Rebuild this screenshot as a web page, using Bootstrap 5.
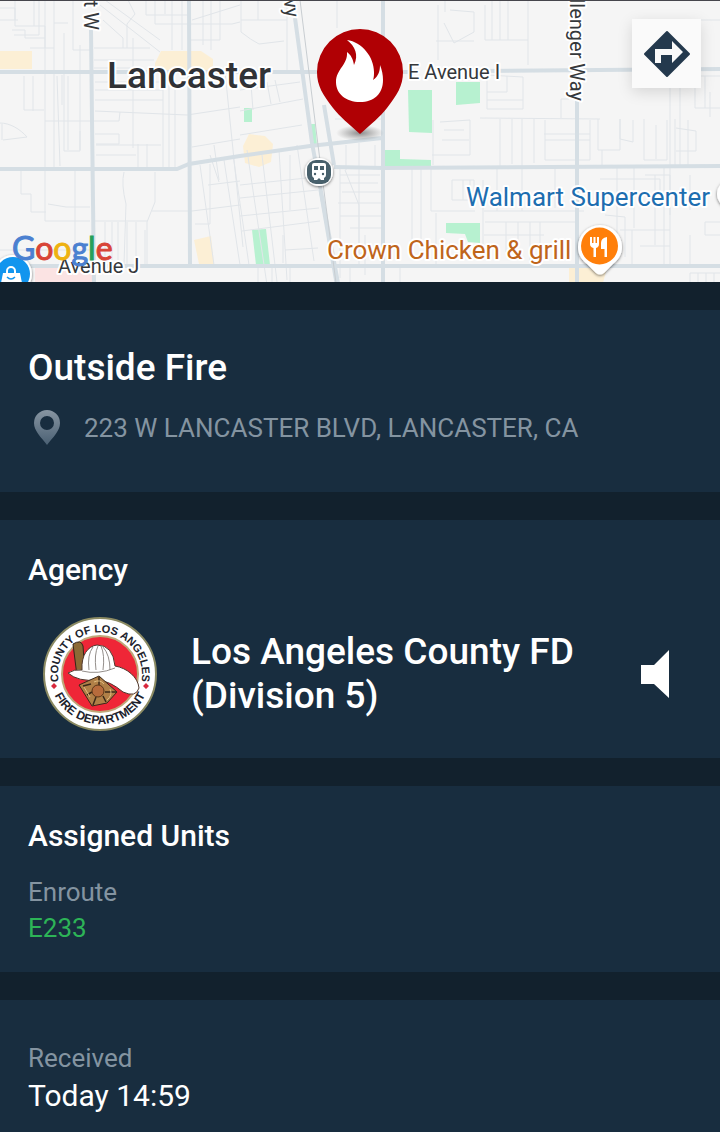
<!DOCTYPE html>
<html lang="en">
<head>
<meta charset="utf-8">
<meta name="viewport" content="width=device-width, initial-scale=1">
<title>Incident details</title>
<link href="https://cdn.jsdelivr.net/npm/bootstrap@5.3.0/dist/css/bootstrap.min.css" rel="stylesheet">
<style>
  body { background: #182d3f; color: #fff; font-family: Roboto, "Liberation Sans", sans-serif; }
  .map-view { height: 282px; background: #f5f5f5; border-top: 1px solid #46464c; }
  .map-view text { font-family: Roboto, "Liberation Sans", sans-serif; }
  .halo { paint-order: stroke; stroke: #fff; stroke-width: 4px; stroke-linejoin: round; }
  .directions { top: 18px; right: 19px; width: 69px; height: 69px; background: #fafafa; border: 0; box-shadow: 0 4px 14px rgba(0,0,0,.13); }
  .panel { border-top: 28px solid #12212d; padding: 32px 28px; }
  .panel-title { font-size: 30px; line-height: 36px; font-weight: 500; }
  .large-title { font-size: 37px; line-height: 44px; font-weight: 500; }
  .muted-text { color: #8494a1; font-size: 26px; line-height: 36px; }
  .unit { color: #2db457; font-size: 26px; line-height: 36px; }
  .received { font-size: 30px; line-height: 40px; }
  .panel-incident { padding-bottom: 46px; }
  .address-row { padding-top: 20px; gap: 22px; }
  .agency-row { padding: 28px 14px 0; gap: 33px; }
  .panel-agency, .panel-units { padding-bottom: 26px; }
</style>
</head>
<body>
<header class="map-view position-relative overflow-hidden">
  <svg width="100%" height="100%" viewBox="0 1 720 281" preserveAspectRatio="xMidYMid slice" role="img" aria-label="Map of Lancaster">
    <defs>
      <radialGradient id="pinShadow"><stop offset="0" stop-color="#444" stop-opacity=".6"/><stop offset="1" stop-color="#555" stop-opacity="0"/></radialGradient>
      <filter id="drop" x="-30%" y="-30%" width="160%" height="160%"><feDropShadow dx="0" dy="1" stdDeviation="1.5" flood-opacity=".55"/></filter>
    </defs>
    <rect width="720" height="283" fill="#f5f5f5"/>
    <!-- blocks -->
    <g fill="#fcefd5">
      <path d="M0 51h32v18H0zM155 63l6-12h40l12 8v13h-58zM194 240l17-4 3 28h-15zM243 146l6-12 16 2 8 8-2 18-12 5-14-4zM569 268h38l-4 15h-34z"/>
    </g>
    <path d="M35 268h60v15H35z" fill="#fbe3e3"/>
    <g fill="#b7f1d0">
      <path d="M244 108h8v14h-8zM408 90h24v43l-23-1zM456 82h24v21l-24 2zM385 150h15v9l31 1v6l-46 3zM310 124h5l2 21-5-1zM252 230l14-1 4 36h-14zM446 223h34v20l-12-1-3-8-19-1z"/>
    </g>
    <!-- local streets -->
    <g fill="none" stroke="#e1e5e9" stroke-width="1">
      <path d="M0 8h15v18h30v22M12 30h13v8h20M15 0v20M34 0v26M39 0v35h-25M45 0v168M54 0v168M54 23h14M57 76l3 90M64 33v118h16v-20M68 76v74M80 45v105M73 0v50h18M24 76v34h20M33 76v35M0 123c10 0 20 6 27 14l-24 3M2 124v16M45 121h74l1-9M21 168v26h10v18h15M45 168v53h45M75 168v75M48 204l18 3h24M0 250h90M0 20h18M62 75v30M30 48h24"/>
      <path d="M100 5l60 47M105 0l55 40M103 20l20 18v10M128 0l7 14-8 10v24M146 0v15h42M155 0v24h35M165 0v14M172 0v50M182 0v50M190 40h30V0M203 0v45M211 0v50M133 38v110M94 48h56M94 60h60M94 68h36M95 82h68M95 90h68M95 100h68M95 111l92 4 53-8M95 134h24v10H96M96 145h65M96 155h40M138 144v23M147 144v23M163 85v82M169 85v82M175 80v88M190 24h42l8-2M192 20l48-15"/>
      <path d="M124 172q-3 12 2 32l-2 60M155 172v30l-8 20v45M95 221h52M152 211h40M105 222v44M112 222v44M118 222v44M127 222v44M136 222v44M145 230v38M192 211l48-6M200 165l14 100M210 155l9 27M225 72l18 175M214 145l5 35M192 147l48-8M208 185l32-4M195 224h15v-60M224 160l16 105M233 155l16 110"/>
      <path d="M241 0v32q10 8 18 12l25-3M241 20h46M258 0v20M287 0v70M337 0v28M250 72l3 38M267 82l4 22M275 80l5 22M240 90l60-8M240 111l63-12M240 135l62-10M247 150l20 135M262 155l15 127M279 150l8 130M290 155v55M240 185l76-8M240 198l78-8M240 216l79-8M242 231l78-10M285 250l33-2M283 235v28M297 145l17 116M340 175h40M340 183h38M342 192h40M338 203h46M340 216h44M350 228h34M340 168v110M359 143v110l22 1M346 145v25M375 145v23M345 170l14 35v60M365 235v40M335 119h48M258 265v18M272 265v18M290 265v18M350 265v18M400 265v18"/>
      <path d="M412 166v90M421 166v80M431 166v45h44M433 120v45M440 122l30-2v35h-38M442 140h27M444 130h20M445 0v12M438 5v55M450 10l24 2v20l-20 11-10-20M436 41h38M436 213v52M452 180h22v20h-22zM463 180v20M470 180v20M485 5v35h43M492 0v40M500 0v40M508 0v40M528 0v65M487 75l36 2v32h-36zM487 100h36M487 92h20V76M480 118l120 1M500 119v47M512 119v45M522 119v92M534 119v44M544 134h46M545 120v40h45v-40M545 140h45M561 118v-19h8"/>
      <path d="M598 119v31h22v-31M620 119v20l13 3v-22M602 150v17M644 119v41h23v-40M656 125v34M675 119v48M688 120v46M676 128l20 3v20h-20M695 76v32h25M705 76v32M670 88v79M680 88v79M690 76h30M710 92v25M700 20h20M600 179h60v20M617 167v70M634 168v60M645 175h25v40M655 175v70M664 168v96M670 168v96M690 175v35M605 215l20 2v40M620 230h50M632 230v35M705 222h15M705 222v13h15M690 235v30M640 246h30M690 273h30M690 273v9M698 273v9M706 273v9M714 273v9M483 180v70M497 168v43M506 222v30M518 222v30M530 222v40M540 222v42M484 211h100M485 222h90M484 235h60M555 168v40"/>
    </g>
    <!-- arterial roads -->
    <g fill="none" stroke="#d5dee4" stroke-width="4">
      <path d="M0 72h320M320 72h90M480 71l240-2M91 30l1 90 2 163M189 0l1 265"/>
      <path d="M0 169h177l12-5 51-8 70-10 72-8M334 167l50 1 336-2M0 266h720M383 0v283"/>
      <path d="M295 18l17 125 26 140M324 105l10 60M577 95v188"/>
      <path d="M320 190l16 93" stroke-width="3"/>
    </g>
    <path d="M300 0l18 145 18 138" fill="none" stroke="#c8cdd1" stroke-width="1"/>
    <!-- place labels -->
    <g fill="#35383b" font-size="20">
      <text class="halo" transform="translate(84 30) rotate(90)" text-anchor="end">t W</text>
      <text class="halo" transform="translate(286 18) rotate(83)" text-anchor="end">wy</text>
      <text class="halo" transform="translate(570 101) rotate(90)" text-anchor="end">llenger Way</text>
      <text class="halo" x="408" y="79">E Avenue I</text>
      <text class="halo" x="58" y="273">Avenue J</text>
    </g>
    <text class="halo" x="107" y="88" font-size="37" font-weight="500" fill="#303236">Lancaster</text>
    <text class="halo" x="466" y="206" font-size="26" fill="#1d6eb0">Walmart Supercenter</text>
    <text class="halo" x="327" y="259" font-size="26" fill="#bf651b">Crown Chicken &amp; grill</text>
    <circle cx="731" cy="194" r="14" fill="#fff" filter="url(#drop)"/>
    <!-- transit stop -->
    <g>
      <circle cx="319" cy="172" r="14" fill="#fff" filter="url(#drop)"/>
      <rect x="307" y="160" width="24" height="24" rx="9" fill="#48606b"/>
      <path d="M314 163h10q2 0 2 2v10q0 2-2 3v2h-3l-2-2-2 2h-3v-2q-2-1-2-3v-10q0-2 2-2z" fill="#fff"/>
      <path d="M314 166h4v4h-4zM320 166h4v4h-4z" fill="#48606b"/><circle cx="315" cy="174" r="1.200" fill="#48606b"/><circle cx="323" cy="174" r="1.200" fill="#48606b"/>
    </g>
    <!-- restaurant -->
    <path d="M600 225a22 22 0 0 1 22 22c0 8-4 13-9 17l-9 9q-4 3-8 0l-9-9c-5-4-9-9-9-17a22 22 0 0 1 22-22z" fill="#fff" filter="url(#drop)"/>
    <circle cx="599.500" cy="246" r="18.500" fill="#ff7f0a"/>
    <path d="M590 237h2v6h1.500v-6h2v6H597v-6h2v7q0 3-3 4v9h-2.500v-9q-3.500-1-3.500-4zM607 237v20h-2.500v-8H601v-6q0-5 6-6z" fill="#fff"/>
    <!-- shopping -->
    <circle cx="13" cy="274" r="19" fill="#fff" filter="url(#drop)"/>
    <circle cx="13" cy="274" r="17" fill="#1295ee"/>
    <path d="M3 273h17l2 10H1z" fill="#fff"/><path d="M7 275v-4a4 4 0 0 1 8 0v4" fill="none" stroke="#fff" stroke-width="2"/><path d="M7 277q4 4 8 0" fill="none" stroke="#1295ee" stroke-width="1.500"/>
    <!-- map provider wordmark -->
    <text x="12" y="260" font-size="32" style="font-family:Lato,Roboto,sans-serif" stroke-width="1"><tspan fill="#4b80d0" stroke="#4b80d0">G</tspan><tspan fill="#d84437" stroke="#d84437">o</tspan><tspan fill="#eeb211" stroke="#eeb211">o</tspan><tspan fill="#4b80d0" stroke="#4b80d0">g</tspan><tspan fill="#27a058" stroke="#27a058">l</tspan><tspan fill="#d84437" stroke="#d84437">e</tspan></text>
    <!-- incident pin -->
    <ellipse cx="360" cy="133" rx="24" ry="8" fill="url(#pinShadow)"/>
    <path d="M360 134C349 124 340 117 333 108C323 95 317 86 317 72A43 43 0 0 1 403 72C403 86 397 95 387 108C380 117 371 124 360 134z" fill="#b00004"/>
    <path d="M347 40C362 42 374 57 374 72C374 75 374 77 373 80C379 76 380 70 380 65C382 70 383 75 383 80C383 94 374 102 360 102C346 102 336 94 336 82C336 69 348 65 347 52C351 55 353 59 354 65C359 55 355 46 347 40z" fill="#fff"/>
  </svg>
  <button type="button" class="directions position-absolute p-0 d-flex align-items-center justify-content-center" aria-label="Directions">
    <svg width="48" height="48" viewBox="0 0 48 48"><path d="M24 2l22 22-22 22L2 24z" fill="#24394d" stroke="#24394d" stroke-width="2" stroke-linejoin="round"/><path d="M12 33V19h17v-8l11 11-11 11v-8H18v8z" fill="#fafafa"/></svg>
  </button>
</header>

<main>
  <section class="panel panel-incident">
    <h1 class="large-title mb-0 pt-1">Outside Fire</h1>
    <div class="address-row d-flex align-items-center ps-1">
      <svg width="30" height="36" viewBox="0 0 30 36" aria-hidden="true" class="flex-shrink-0">
        <defs><linearGradient id="pinFade" x2="0" y2="1"><stop stop-color="#8795a2"/><stop offset="1" stop-color="#4a6073"/></linearGradient></defs>
        <path fill="url(#pinFade)" fill-rule="evenodd" d="M15 0a13 13 0 0 1 13 13c0 8-7 14-13 22C9 27 2 21 2 13A13 13 0 0 1 15 0zm0 6a7 7 0 1 0 0 14 7 7 0 0 0 0-14z"/>
      </svg>
      <span class="muted-text">223 W LANCASTER BLVD, LANCASTER, CA</span>
    </div>
  </section>

  <section class="panel panel-agency">
    <h2 class="panel-title mb-0">Agency</h2>
    <div class="agency-row d-flex align-items-center">
      <svg width="116" height="116" viewBox="-58 -58 116 116" class="flex-shrink-0" role="img" aria-label="County of Los Angeles Fire Department">
        <defs>
          <path id="arcTop" d="M-36 22A42 42 0 1 1 36 22"/>
          <path id="arcBottom" d="M-50 0A50 50 0 0 0 50 0"/>
        </defs>
        <circle r="56" fill="#fff" stroke="#8b8a62" stroke-width="2"/>
        <circle r="38" fill="#ef2637" stroke="#bfa779" stroke-width="2"/>
        <g fill="#20222c" font-weight="700" text-anchor="middle" style="font-family:'Liberation Sans',sans-serif">
          <text font-size="11"><textPath href="#arcTop" startOffset="50%">COUNTY OF LOS ANGELES</textPath></text>
          <text font-size="12"><textPath href="#arcBottom" startOffset="50%">FIRE DEPARTMENT</textPath></text>
        </g>
        <path d="M-46 9l3 3-3 3-3-3zM46 9l3 3-3 3-3-3z" fill="#d8283c"/>
        <path d="M-27-30q8-5 10 2l2 28-8 2z" fill="#8c6a35" stroke="#33251a"/>
        <path d="M-32-1Q-26-5-18-4C-19-19-12-28-3-29Q13-29 15-8C27-6 38 3 39 14Q36 24 23 18Q10 7-2 6Q-22 8-32-1z" fill="#fff" stroke="#51382d"/>
        <path d="M-11-4q-2-15 4-23M-4-4q-2-16 2-24M3-4q2-15-2-24M10-4q0-15-7-23M-18-3q16 4 33-3" fill="none" stroke="#77716c" stroke-width=".8"/>
        <path d="M-21 11L-1 2L17 18L7 29L-8 32z" fill="#b08047" stroke="#3b2919"/>
        <path d="M-17 12L-9 10M-1 3v8M16 18l-11 0M-7 31l3-8M-13 21l5-3M6 28l-3-6" stroke="#3b2919" stroke-width="1.500"/>
        <path d="M-16 13l6 10M-6 8q6-3 10 2M10 15q3 6-3 11" fill="none" stroke="#e0bd80"/>
        <circle cx="-2" cy="17" r="6" fill="#b76b3c" stroke="#5a3518"/>
      </svg>
      <div class="large-title flex-grow-1">Los Angeles County FD<br>(Division 5)</div>
      <button type="button" class="btn p-0 border-0 me-2 flex-shrink-0 d-flex" aria-label="Listen">
        <svg width="30" height="48" viewBox="0 0 30 48"><path d="M1 15h13L29 0v48L14 34H1z" fill="#fff"/></svg>
      </button>
    </div>
  </section>

  <section class="panel panel-units">
    <h2 class="panel-title mb-0">Assigned Units</h2>
    <div class="muted-text pt-3 mt-1">Enroute</div>
    <div class="unit">E233</div>
  </section>

  <section class="panel">
    <div class="muted-text pt-2">Received</div>
    <div class="received">Today 14:59</div>
  </section>
</main>
<script src="https://cdn.jsdelivr.net/npm/bootstrap@5.3.0/dist/js/bootstrap.bundle.min.js"></script>
</body>
</html>
